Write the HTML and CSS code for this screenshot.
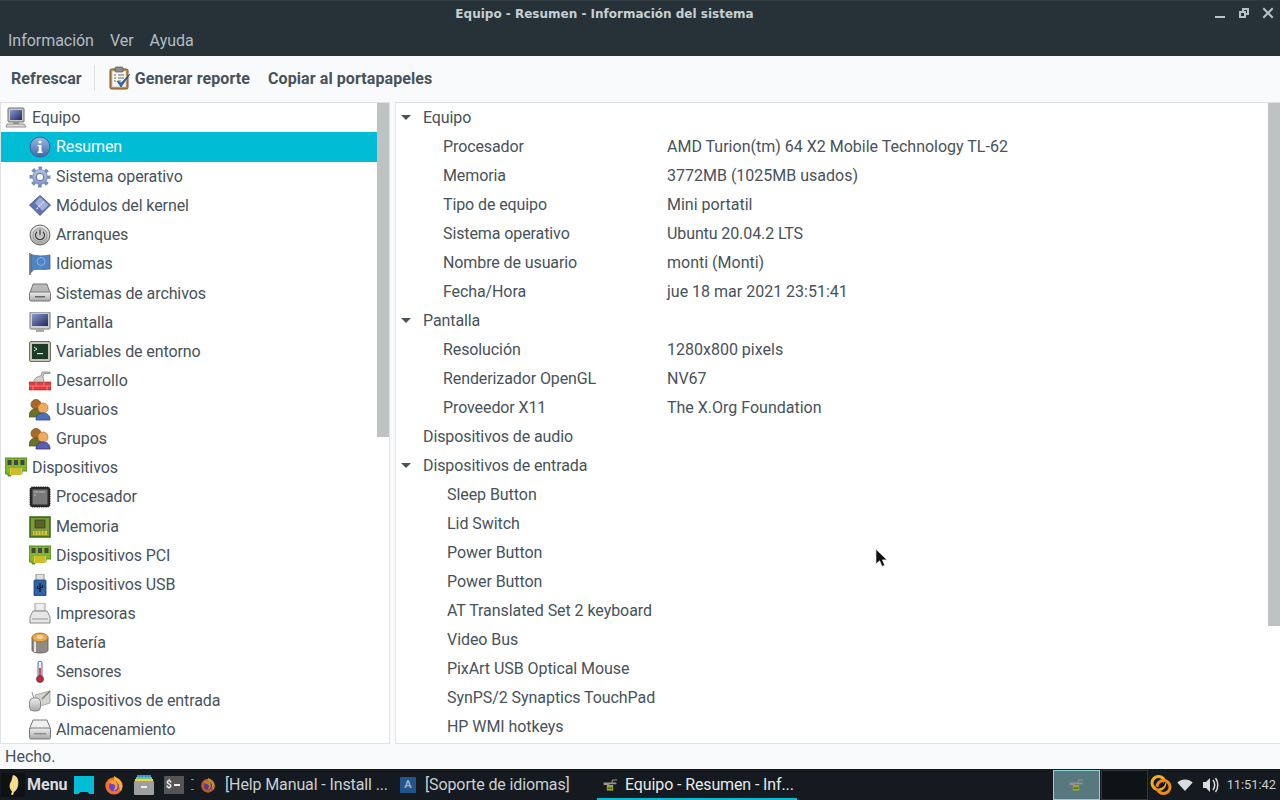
FILE: index.html
```html
<!DOCTYPE html>
<html lang="es">
<head>
<meta charset="utf-8">
<title>Equipo - Resumen - Información del sistema</title>
<link rel="stylesheet" href="styles.css">
</head>
<body>
<svg class="defs" width="0" height="0">
<defs>
<linearGradient id="blue" x1="0" y1="0" x2="0" y2="1"><stop offset="0" stop-color="#9db9e2"/><stop offset="1" stop-color="#3c68a8"/></linearGradient>
<linearGradient id="gearg" x1="0" y1="0" x2="0" y2="1"><stop offset="0" stop-color="#b9c3e2"/><stop offset="1" stop-color="#8498c9"/></linearGradient>
<linearGradient id="grey" x1="0" y1="0" x2="0" y2="1"><stop offset="0" stop-color="#eeeeee"/><stop offset="1" stop-color="#a9a9a9"/></linearGradient>
<linearGradient id="screen" x1="0" y1="0" x2="1" y2="1"><stop offset="0" stop-color="#8a9bd0"/><stop offset="1" stop-color="#20265c"/></linearGradient>
<symbol id="i-computer" viewBox="0 0 22 22"><rect x="3" y="1" width="16" height="14" rx="1" fill="#c9c9c9" stroke="#6f6f6f"/><rect x="5" y="3" width="12" height="10" fill="url(#screen)"/><rect x="8" y="15" width="6" height="2" fill="#999"/><path d="M2 17h17l2 3H1z" fill="#ddd" stroke="#777" stroke-width=".8"/></symbol>
<symbol id="i-info" viewBox="0 0 22 22"><circle cx="11" cy="11" r="10" fill="url(#blue)" stroke="#3a5f9e"/><rect x="9.700" y="9" width="2.800" height="7.500" fill="#fff"/><rect x="8.500" y="15.500" width="5" height="1.500" fill="#fff"/><rect x="8.500" y="9" width="3" height="1.200" fill="#fff"/><circle cx="11" cy="6" r="1.600" fill="#fff"/></symbol>
<symbol id="i-gear" viewBox="0 0 22 22"><circle cx="11" cy="11" r="8.500" fill="none" stroke="#728bc2" stroke-width="4" stroke-dasharray="3.400 3.270" stroke-dashoffset="1.700"/><circle cx="11" cy="11" r="7.500" fill="url(#gearg)" stroke="#6a83b5" stroke-width=".6"/><circle cx="11" cy="11" r="3.800" fill="#f6f6f8" stroke="#5a72a2"/></symbol>
<symbol id="i-kernel" viewBox="0 0 22 22"><path d="M11 .5L21.500 10 11 20.500 .5 10z" fill="#5f75b2" stroke="#3d4f85" stroke-width=".8"/><path d="M11 2l8.500 8-6 6L6 8z" fill="#9fb0da"/><path d="M7.500 14l7.500-7.500" stroke="#e4e8f4" stroke-width="1.200" stroke-dasharray="2 1"/></symbol>
<symbol id="i-power" viewBox="0 0 22 22"><circle cx="11" cy="11" r="10" fill="url(#grey)" stroke="#666"/><circle cx="11" cy="11" r="7" fill="#c6c6c6" stroke="#8a8a8a" stroke-width=".7"/><path d="M8 7.800a4.500 4.500 0 1 0 6 0" fill="none" stroke="#444" stroke-width="1.200"/><path d="M11 5.500V11" stroke="#444" stroke-width="1.200"/></symbol>
<symbol id="i-flag" viewBox="0 0 22 22"><rect x="0" y="0" width="2" height="22" fill="#8a8a8a"/><path d="M2 1.500c6 2 13 1.500 19 .5v14c-6 1-12 0-16 .5l-3 3z" fill="#4f84c4" stroke="#2f5a96" stroke-width=".7"/><circle cx="12" cy="8.500" r="4" fill="none" stroke="#8bb3df"/></symbol>
<symbol id="i-disk" viewBox="0 0 22 22"><path d="M4 1h14l3 9H1z" fill="#b9b9b9" stroke="#777"/><rect x=".5" y="9" width="21" height="9" rx="1.500" fill="url(#grey)" stroke="#777"/><rect x="6" y="13" width="10" height="1.500" fill="#666"/></symbol>
<symbol id="i-hdd" viewBox="0 0 22 22"><path d="M4 1h14l3.500 9H.5z" fill="#f0f0f0" stroke="#7d7d7d"/><rect x=".5" y="9" width="21" height="11" rx="1.500" fill="url(#grey)" stroke="#777"/><rect x="5" y="14" width="12" height="1.500" fill="#8d8d8d"/></symbol>
<symbol id="i-monitor" viewBox="0 0 22 22"><rect x="1" y="0" width="20" height="17" rx="1" fill="#d0d0d0" stroke="#777"/><rect x="3" y="2" width="16" height="12" fill="url(#screen)"/><rect x="7" y="17" width="8" height="3" fill="#aaa"/></symbol>
<symbol id="i-term" viewBox="0 0 22 22"><rect x=".5" y=".5" width="21" height="20" rx="1.500" fill="#c4c6b8" stroke="#6c6c60"/><rect x="3" y="3" width="16" height="15" fill="#1e3a28"/><path d="M5 6l3 2-3 2" stroke="#d8e8d8" fill="none"/><rect x="8" y="12" width="6" height="1.200" fill="#d8e8d8"/></symbol>
<symbol id="i-dev" viewBox="0 0 22 22"><path d="M0 12h22v8H0z" fill="#e33a3a" stroke="#b32020" stroke-width=".6"/><path d="M0 16h22M7 12v4M15 12v4M4 16v4M18 16v4" stroke="#f5a0a0" stroke-width=".7"/><path d="M5 12c0-4 4-6 7-6l1-4h8v1.500h-6L14 7l1 5z" fill="#cfcfcf" stroke="#777" stroke-width=".7"/></symbol>
<symbol id="i-users" viewBox="0 0 22 22"><circle cx="7" cy="5.500" r="5" fill="#a9692a" stroke="#75481c" stroke-width=".7"/><path d="M0 18c0-6 3-8 7-8s6 2 6 8z" fill="#6d7324" stroke="#4b4f18" stroke-width=".7"/><circle cx="14" cy="9" r="5" fill="#f0aa5e" stroke="#b5762e" stroke-width=".7"/><path d="M7 21c0-5 3-7 7-7s7 2 7 7z" fill="#4a72b8" stroke="#2c4a85" stroke-width=".8"/></symbol>
<symbol id="i-groups" viewBox="0 0 22 22"><circle cx="7" cy="5.500" r="5" fill="#a9692a" stroke="#75481c" stroke-width=".7"/><path d="M0 18c0-6 3-8 7-8s6 2 6 8z" fill="#6d7324" stroke="#4b4f18" stroke-width=".7"/><circle cx="14" cy="9" r="5" fill="#f0aa5e" stroke="#b5762e" stroke-width=".7"/><path d="M7 21c0-5 3-7 7-7s7 2 7 7z" fill="#5a5fb0" stroke="#3a2f85" stroke-width=".8"/></symbol>
<symbol id="i-pci" viewBox="0 0 22 22"><path d="M0 1h22v13h-5v3H6v2H3v-2H0z" fill="#7cb82a" stroke="#3f7a10" stroke-width=".8"/><rect x="2.500" y="3" width="4" height="5" fill="#444"/><rect x="9" y="3" width="4" height="5" fill="#444"/><rect x="15.500" y="3" width="4" height="5" fill="#444"/><path d="M5 11h12v7H5z" fill="#e5cf3a"/><path d="M7 11v7M9 11v7M11 11v7M13 11v7M15 11v7" stroke="#998a18" stroke-width=".6"/></symbol>
<symbol id="i-cpu" viewBox="0 0 22 22"><rect x="1" y="1" width="20" height="20" rx="2.500" fill="#2b2b2b" stroke="#111" stroke-dasharray="1 .8"/><rect x="3.500" y="3.500" width="15" height="15" fill="#7a7a7a"/><path d="M5 6h4M10 6h6M5 9h2" stroke="#bbb"/></symbol>
<symbol id="i-mem" viewBox="0 0 22 22"><rect x="1" y="1" width="20" height="20" fill="#7f9a3c" stroke="#2e6a0c" stroke-width="1.500"/><rect x="6" y="4" width="10" height="8" fill="#57652c" stroke="#333a1a" stroke-width=".7"/><path d="M4 15h14v4H4z" fill="#d8c83c"/><path d="M6 15v4M9 15v4M12 15v4M15 15v4" stroke="#80741a" stroke-width=".7"/></symbol>
<symbol id="i-usb" viewBox="0 0 22 22"><rect x="7" y="0" width="8" height="7" fill="#e0e0e0" stroke="#777" stroke-width=".8"/><rect x="5" y="6" width="12" height="16" rx="1" fill="#2f62a8" stroke="#1d3d70" stroke-width=".8"/><path d="M11 9v9M8.500 12v2l2.500 1M13.500 11v2L11 14" stroke="#0c1420" fill="none" stroke-width="1.200"/></symbol>
<symbol id="i-printer" viewBox="0 0 22 22"><rect x="6" y="0" width="10" height="8" fill="#eee" stroke="#888" stroke-width=".8"/><path d="M4 8h14l3 6v6H1v-6z" fill="#e6e6e6" stroke="#808080" stroke-width=".9"/><rect x="3" y="15" width="16" height="2" fill="#bdbdbd"/></symbol>
<symbol id="i-battery" viewBox="0 0 22 22"><path d="M3 5v13c0 2 3.500 3 8 3s8-1 8-3V5z" fill="#8f8b84" stroke="#555" stroke-width=".8"/><path d="M6 8v12" stroke="#e4e4e4" stroke-width="2"/><ellipse cx="11" cy="5.500" rx="8" ry="4.500" fill="#e9a84c" stroke="#9c6a20" stroke-width=".8"/><ellipse cx="11" cy="5" rx="3.500" ry="2" fill="#f6d59c"/></symbol>
<symbol id="i-thermo" viewBox="0 0 22 22"><rect x="9" y="0" width="4" height="16" rx="2" fill="#e8eef8" stroke="#304a80" stroke-width=".8"/><rect x="10.200" y="7" width="1.600" height="9" fill="#d3232a"/><circle cx="11" cy="18" r="3.500" fill="#d3232a" stroke="#304a80" stroke-width=".8"/></symbol>
<symbol id="i-input" viewBox="0 0 22 22"><path d="M6 5l15-4v12L8 17z" fill="#d4d4d0" stroke="#9a9a94" stroke-width=".8"/><path d="M13 9l8-8" stroke="#777" stroke-width="1.200"/><path d="M3 2l2 7" stroke="#8a8a8a"/><rect x=".5" y="8" width="11" height="13" rx="4" fill="url(#grey)" stroke="#777" stroke-width=".8"/></symbol>
<symbol id="i-clip" viewBox="0 0 24 24"><rect x="2" y="3" width="18" height="20" rx="1.500" fill="#c08a48" stroke="#7a5320"/><rect x="4" y="5" width="14" height="16" fill="#f4f4f0" stroke="#aaa" stroke-width=".5"/><rect x="7" y="1" width="8" height="5" rx="1" fill="#8d8d8d" stroke="#555" stroke-width=".7"/><path d="M6 9h2M10 9h6M6 12h2M10 12h6M6 15h2M10 15h3" stroke="#6a6a6a"/><path d="M9 15l4 6 9-13-9 9z" fill="#2f62b8" stroke="#1d3f85" stroke-width=".6"/></symbol>
<symbol id="i-feather" viewBox="0 0 24 24"><path d="M12 2c5 1 6 6 5 11-1 3-2 5-4 6l-1 3-2-.5 1-3c-3-3-3-7-1-10 1-2 1-4 2-6.500z" fill="#f5dc8c"/></symbol>
<symbol id="i-ff" viewBox="0 0 22 22"><circle cx="11" cy="12" r="9.500" fill="#f0702c"/><path d="M11 1c3 2 6 3 8 7 2 5 1 8-1 10-1-8-4-11-7-13z" fill="#f7b52d"/><circle cx="11" cy="12.500" r="5.500" fill="#6d44c4"/><path d="M6 6c5-2 9 1 9 6 0 3-2 5-5 5 3-2 3-6 0-7-2-.5-3 .5-4-4z" fill="#f6a12f"/></symbol>
<symbol id="i-panelapp" viewBox="0 0 20 20"><path d="M2 7h10V5l1-2h6v1.500h-5l-1 2.500h5v2H9v1H2z" fill="#a08f8a"/><rect x="6" y="10" width="8" height="7" fill="#9aa82c"/><rect x="7" y="13" width="6" height="2" fill="#5c6a16"/></symbol>
</defs>
</svg>

<div class="window">
  <header class="titlebar">
    <span class="title">Equipo - Resumen - Información del sistema</span>
    <div class="wm">
      <svg class="wm-btn" viewBox="0 0 14 14"><rect x="2" y="10" width="10" height="2" fill="#b8c2c6"/></svg>
      <svg class="wm-btn" viewBox="0 0 14 14"><path d="M5 2h7v7H9v3H2V5h3zm2 2v1h2v2h1V4zM4 7v3h3V7z" fill="#b8c2c6" fill-rule="evenodd"/></svg>
      <svg class="wm-btn" viewBox="0 0 14 14"><path d="M3 3l8 8M11 3l-8 8" stroke="#b8c2c6" stroke-width="2" stroke-linecap="square"/></svg>
    </div>
  </header>
  <nav class="menubar"><span>Información</span><span>Ver</span><span>Ayuda</span></nav>
  <div class="toolbar">
    <span class="tool">Refrescar</span>
    <span class="tool-sep"></span>
    <svg class="tool-icon"><use href="#i-clip"/></svg>
    <span class="tool tool-gen">Generar reporte</span>
    <span class="tool">Copiar al portapapeles</span>
  </div>
  <main class="panes">
    <section class="pane side">
      <ul class="tree">
        <li class="top"><svg class="ico"><use href="#i-computer"/></svg>Equipo</li>
        <li class="sub sel tall"><svg class="ico"><use href="#i-info"/></svg>Resumen</li>
        <li class="sub"><svg class="ico"><use href="#i-gear"/></svg>Sistema operativo</li>
        <li class="sub"><svg class="ico"><use href="#i-kernel"/></svg>Módulos del kernel</li>
        <li class="sub"><svg class="ico"><use href="#i-power"/></svg>Arranques</li>
        <li class="sub tall"><svg class="ico"><use href="#i-flag"/></svg>Idiomas</li>
        <li class="sub"><svg class="ico"><use href="#i-disk"/></svg>Sistemas de archivos</li>
        <li class="sub"><svg class="ico"><use href="#i-monitor"/></svg>Pantalla</li>
        <li class="sub"><svg class="ico"><use href="#i-term"/></svg>Variables de entorno</li>
        <li class="sub"><svg class="ico"><use href="#i-dev"/></svg>Desarrollo</li>
        <li class="sub"><svg class="ico"><use href="#i-users"/></svg>Usuarios</li>
        <li class="sub"><svg class="ico"><use href="#i-groups"/></svg>Grupos</li>
        <li class="top"><svg class="ico"><use href="#i-pci"/></svg>Dispositivos</li>
        <li class="sub tall"><svg class="ico"><use href="#i-cpu"/></svg>Procesador</li>
        <li class="sub"><svg class="ico"><use href="#i-mem"/></svg>Memoria</li>
        <li class="sub"><svg class="ico"><use href="#i-pci"/></svg>Dispositivos PCI</li>
        <li class="sub"><svg class="ico"><use href="#i-usb"/></svg>Dispositivos USB</li>
        <li class="sub"><svg class="ico"><use href="#i-printer"/></svg>Impresoras</li>
        <li class="sub"><svg class="ico"><use href="#i-battery"/></svg>Batería</li>
        <li class="sub"><svg class="ico"><use href="#i-thermo"/></svg>Sensores</li>
        <li class="sub"><svg class="ico"><use href="#i-input"/></svg>Dispositivos de entrada</li>
        <li class="sub"><svg class="ico"><use href="#i-hdd"/></svg>Almacenamiento</li>
      </ul>
      <div class="scroll scroll-side"><div class="thumb"></div></div>
    </section>
    <div class="grip"></div>
    <section class="pane detail">
      <div class="sheet">
        <div class="row head"><i class="caret"></i><span>Equipo</span></div>
        <div class="row kv"><span class="k">Procesador</span><span>AMD Turion(tm) 64 X2 Mobile Technology TL-62</span></div>
        <div class="row kv"><span class="k">Memoria</span><span>3772MB (1025MB usados)</span></div>
        <div class="row kv"><span class="k">Tipo de equipo</span><span>Mini portatil</span></div>
        <div class="row kv"><span class="k">Sistema operativo</span><span class="tight">Ubuntu 20.04.2 LTS</span></div>
        <div class="row kv"><span class="k">Nombre de usuario</span><span>monti (Monti)</span></div>
        <div class="row kv"><span class="k">Fecha/Hora</span><span>jue 18 mar 2021 23:51:41</span></div>
        <div class="row head"><i class="caret"></i><span>Pantalla</span></div>
        <div class="row kv"><span class="k">Resolución</span><span>1280x800 pixels</span></div>
        <div class="row kv"><span class="k">Renderizador OpenGL</span><span>NV67</span></div>
        <div class="row kv"><span class="k">Proveedor X11</span><span>The X.Org Foundation</span></div>
        <div class="row head"><i class="caret none"></i><span>Dispositivos de audio</span></div>
        <div class="row head"><i class="caret"></i><span>Dispositivos de entrada</span></div>
        <div class="row leaf">Sleep Button</div>
        <div class="row leaf">Lid Switch</div>
        <div class="row leaf">Power Button</div>
        <div class="row leaf">Power Button</div>
        <div class="row leaf">AT Translated Set 2 keyboard</div>
        <div class="row leaf">Video Bus</div>
        <div class="row leaf">PixArt USB Optical Mouse</div>
        <div class="row leaf">SynPS/2 Synaptics TouchPad</div>
        <div class="row leaf">HP WMI hotkeys</div>
      </div>
      <div class="scroll scroll-detail"><div class="thumb"></div></div>
    </section>
  </main>
  <div class="status">Hecho.</div>
</div>

<footer class="taskbar">
  <span class="menu-btn"><span class="feather-box"><svg class="feather"><use href="#i-feather"/></svg></span><b>Menu</b></span>
  <svg class="launch" viewBox="0 0 20 18"><path d="M0 0h20v18h-5l-1-2H6l-1 2H0z" fill="#00bcd4"/></svg>
  <svg class="launch"><use href="#i-ff"/></svg>
  <svg class="launch" viewBox="0 0 20 20"><rect x="3" y="0" width="14" height="3" fill="#3f8fd8"/><rect x="2" y="2" width="16" height="3" fill="#6fc46f"/><rect x="1" y="4" width="18" height="3" fill="#f2d24a"/><rect y="6" width="20" height="14" rx="1" fill="#9e9e9e"/><rect x="7" y="11" width="6" height="2" fill="#eee"/></svg>
  <span class="termapp"><b>$</b><i></i></span>
  <span class="dots"></span>
  <span class="task first"><svg class="task-ico dim"><use href="#i-ff"/></svg><span class="task-t">[Help Manual - Install ...</span></span>
  <span class="task second"><span class="letter">A</span><span class="task-t">[Soporte de idiomas]</span></span>
  <span class="task active"><svg class="task-ico"><use href="#i-panelapp"/></svg><span class="task-t">Equipo - Resumen - Inf...</span></span>
  <span class="spacer"></span>
  <span class="ws ws-on"><svg class="ws-ico"><use href="#i-panelapp"/></svg></span>
  <span class="ws"></span>
  <svg class="tray sync" viewBox="0 0 22 22"><circle cx="8.500" cy="9" r="6.500" fill="none" stroke="#f2b01e" stroke-width="3"/><circle cx="13.500" cy="13" r="6.500" fill="none" stroke="#ee8a1a" stroke-width="3"/><path d="M6 13c3 2 8 0 9-5" fill="none" stroke="#17120a" stroke-width="1.500"/></svg>
  <svg class="tray wifi" viewBox="0 0 18 14"><path d="M0 4c5-4.500 13-4.500 18 0L9 14z" fill="#d8dcdc"/></svg>
  <svg class="tray vol" viewBox="0 0 16 16"><path d="M0 5h3l4-4v14l-4-4H0z" fill="#d8dcdc"/><path d="M10 3c2 3 2 7 0 10M12.500 1c3 4 3 10 0 14" fill="none" stroke="#d8dcdc" stroke-width="1.500"/></svg>
  <span class="clock">11:51:42</span>
</footer>
<svg class="pointer" viewBox="0 0 14 22"><path d="M1 1v16l4-3.500 2.500 6 3-1.300L8 12.500h5z" fill="#111" stroke="#eee" stroke-width=".8"/></svg>
</body>
</html>
```
FILE: styles.css
```css
* { box-sizing: border-box; }
html, body { margin: 0; padding: 0; height: 800px; overflow: hidden; }
body { font-family: Roboto, "Liberation Sans", sans-serif; font-size: 16px; color: #47525a; background: #f9fafc; display: flex; flex-direction: column; position: relative; }
.defs { position: absolute; }
.window { height: 769px; display: flex; flex-direction: column; flex: none; }

.titlebar { height: 26px; background: #263238; border-top: 1px solid #2f3b41; display: flex; align-items: center; justify-content: center; padding-right: 71px; position: relative; flex: none; }
.title { font-family: "DejaVu Sans", sans-serif; font-weight: 700; font-size: 12px; color: #c6cfd3; }
.wm { position: absolute; right: 5px; top: 5px; display: flex; gap: 10px; }
.wm-btn { width: 14px; height: 14px; display: block; }

.menubar { height: 30px; background: #263238; color: #b4bdc1; display: flex; align-items: center; gap: 16px; padding: 0 8px 2px; flex: none; letter-spacing: -.03px; }

.toolbar { height: 46px; background: #f9fafc; display: flex; align-items: center; padding: 0 0 2px 11px; flex: none; }
.tool { font-weight: 700; font-size: 16px; color: #47525a; letter-spacing: .09px; }
.tool-sep { width: 1px; height: 26px; background: #dfe2e4; margin: 0 13px 0 12px; }
.tool-icon { width: 24px; height: 24px; margin-right: 3px; flex: none; }
.tool-gen { margin-right: 18px; }

.panes { height: 642px; display: flex; flex: none; }
.pane { background: #fff; border: 1px solid #dfe1e3; display: flex; position: relative; overflow: hidden; }
.side { width: 390px; }
.grip { width: 5px; }
.detail { width: 885px; border-right: 0; }

.tree { list-style: none; margin: 0; padding: 0; flex: 1; min-width: 0; height: 640px; letter-spacing: -.1px; }
.tree li { height: 29px; display: flex; align-items: center; white-space: nowrap; }
.tree .tall { height: 30px; padding-bottom: 1px; }
.tree .top { padding-left: 4px; }
.tree .sub { padding-left: 28px; }
.ico { width: 22px; height: 22px; margin-right: 5px; flex: none; }
.sel { background: #00bcd4; color: #fff; }

.scroll { width: 12px; background: #fff; flex: none; position: relative; }
.thumb { background: #bfc2c2; width: 100%; }
.scroll-side .thumb { height: 334px; }
.scroll-detail .thumb { height: 523px; }

.sheet { flex: 1; min-width: 0; }
.row { height: 29px; display: flex; align-items: center; white-space: nowrap; }
.head { padding-left: 5px; letter-spacing: -.1px; }
.caret { width: 0; height: 0; border-left: 5px solid transparent; border-right: 5px solid transparent; border-top: 5px solid #47525a; margin-right: 12px; flex: none; }
.caret.none { border-top-color: transparent; }
.kv { padding-left: 47px; }
.k { width: 224px; flex: none; letter-spacing: -.1px; }
.tight { letter-spacing: -.1px; }
.leaf { padding-left: 51px; letter-spacing: -.06px; }

.status { height: 25px; display: flex; align-items: center; padding-left: 5px; flex: none; }

.taskbar { height: 31px; background: #141a1f; display: flex; align-items: center; color: #c9d0d3; flex: none; position: relative; white-space: nowrap; }
.menu-btn { display: flex; align-items: center; height: 100%; padding-left: 1px; width: 74px; flex: none; }
.menu-btn b { font-weight: 700; font-size: 16px; color: #d8dde0; margin-left: 2px; }
.feather-box { width: 24px; height: 24px; background: #0f1214; flex: none; display: flex; }
.feather { width: 24px; height: 24px; }
.launch { width: 20px; height: 20px; margin-right: 10px; flex: none; }
.termapp { width: 20px; height: 18px; background: #555; display: flex; align-items: center; padding-left: 2px; gap: 2px; flex: none; }
.termapp b { color: #eee; font-size: 10px; }
.termapp i { width: 6px; height: 2px; background: #eee; }
.dots { width: 3px; height: 11px; margin: 0 6px 0 7px; border-top: 1px solid #889; border-bottom: 1px solid #889; flex: none; }
.task { display: flex; align-items: center; height: 100%; flex: none; }
.task-t { letter-spacing: -.12px; }
.first { width: 200px; }
.second { width: 197px; }
.active { width: 200px; color: #e6eaec; border-bottom: 2px solid #00bcd4; padding: 2px 0 0 5px; }
.task-ico { width: 16px; height: 16px; margin-right: 9px; flex: none; }
.active .task-ico { margin-right: 7px; }
.task-ico.dim { opacity: .75; }
.letter { width: 16px; height: 16px; background: #23548c; color: #9db0c8; font-size: 11px; font-weight: 700; display: flex; align-items: center; justify-content: center; margin-right: 9px; flex: none; }
.spacer { flex: 1; }
.ws { width: 47px; height: 30px; background: #0e1316; border: 1px solid #30383c; flex: none; display: flex; align-items: center; justify-content: center; }
.ws-on { background: #56787e; border: 1px solid #8fd3e0; margin-right: 1px; }
.ws-ico { width: 16px; height: 16px; }
.tray { flex: none; }
.sync { width: 22px; height: 22px; margin-left: 2px; }
.wifi { width: 16px; height: 12px; margin-left: 5px; }
.vol { width: 16px; height: 16px; margin-left: 10px; }
.clock { font-size: 12.800px; margin: 0 4px 0 8px; color: #c9d0d3; }
.pointer { position: absolute; left: 875px; top: 548px; width: 13px; height: 21px; }
```
